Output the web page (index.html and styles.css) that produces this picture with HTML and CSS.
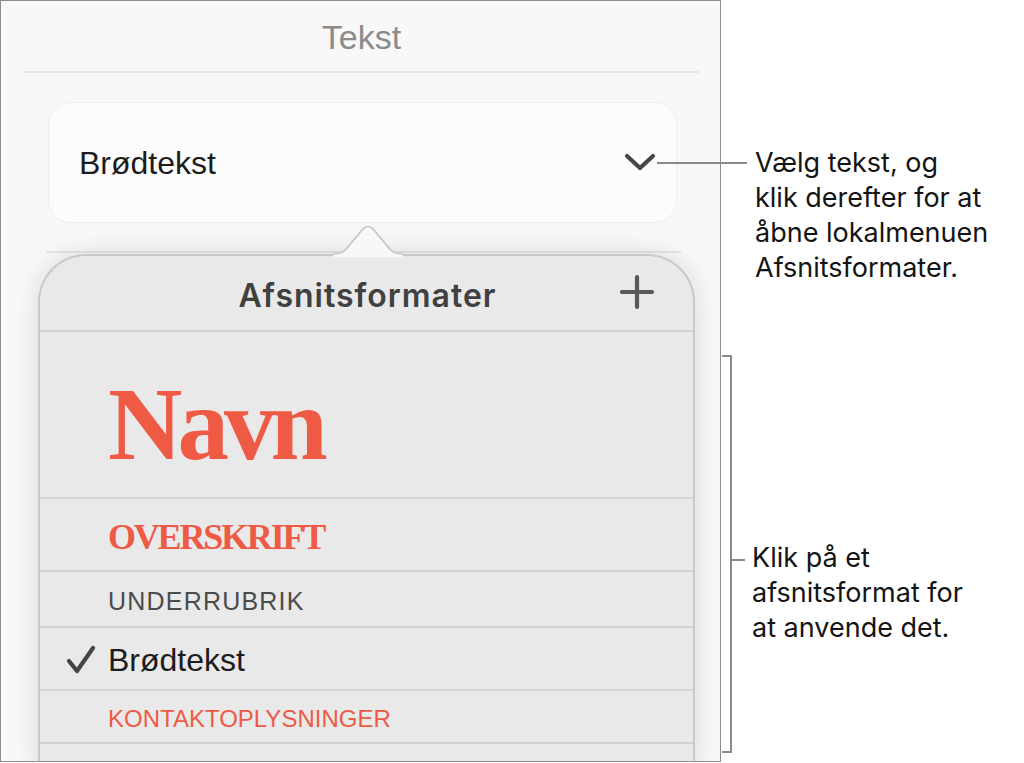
FILE: index.html
```html
<html>
  <head>
    <link rel="stylesheet" href="styles.css">
  </head>
  <body>
    <section class="panel">
      <h2 class="panel-title">Tekst</h2>

      <div class="style-select">
        <span class="style-select-value">Brødtekst</span>
        <svg class="chevron" width="32" height="20" viewBox="0 0 32 20">
          <path d="M3 3 L16 15 L29 3" />
        </svg>
      </div>

      <div class="panel-rule"></div>

      <div class="popover">
        <svg class="popover-arrow" width="72" height="32" viewBox="0 0 72 32">
          <path class="arrow-fill" d="M0 29 C8 29 11 27 15 22 L29 5 Q35 -2 41 5 L55 22 C59 27 62 29 70 29 L70 32 L0 32 Z" />
          <path class="arrow-edge" d="M0 29 C8 29 11 27 15 22 L29 5 Q35 -2 41 5 L55 22 C59 27 62 29 70 29" />
        </svg>
        <div class="popover-head">
          <span></span>
          <h3 class="popover-title">Afsnitsformater</h3>
          <svg class="plus" width="36" height="36" viewBox="0 0 36 36">
            <path d="M18 3 V33 M3 18 H33" />
          </svg>
        </div>
        <ul class="formats">
          <li class="format format-name"><span class="check"></span><span>Navn</span></li>
          <li class="format format-heading"><span class="check"></span><span>OVERSKRIFT</span></li>
          <li class="format format-sub"><span class="check"></span><span>UNDERRUBRIK</span></li>
          <li class="format format-body">
            <svg class="check" width="30" height="30" viewBox="0 0 30 30">
              <path d="M3 16 L11 26 L27 3" />
            </svg>
            <span>Brødtekst</span>
          </li>
          <li class="format format-contact"><span class="check"></span><span>KONTAKTOPLYSNINGER</span></li>
          <li class="format format-more"></li>
        </ul>
      </div>
    </section>

    <aside class="notes">
      <p class="note note-select">Vælg tekst, og<br />klik derefter for at<br />åbne lokalmenuen<br />Afsnitsformater.</p>
      <div class="note-list">
        <div class="bracket"></div>
        <p class="note note-apply">Klik på et<br />afsnitsformat for<br />at anvende det.</p>
      </div>
    </aside>
  </body>
</html>
```

FILE: styles.css
```css
html,
body,
ul,
p,
h2,
h3 {
  margin: 0;
  padding: 0;
}
html {
  font-family: "Liberation Sans", Arial, sans-serif;
  background: #fff;
}
ul {
  list-style-type: none;
}
body {
  display: flex;
  align-items: flex-start;
}

.panel {
  width: 721px;
  height: 762px;
  box-sizing: border-box;
  border: 1px solid #8e8e8e;
  background: #f8f8f8;
  overflow: hidden;
  flex-shrink: 0;
}
.panel-title {
  height: 72px;
  box-sizing: border-box;
  margin: 0 21px 0 23px;
  padding-top: 17px;
  border-bottom: 2px solid #e6e6e6;
  text-align: center;
  font-weight: normal;
  font-size: 34px;
  line-height: 39px;
  color: #8b8b8b;
}
.style-select {
  display: flex;
  align-items: center;
  justify-content: space-between;
  width: 629px;
  height: 121px;
  box-sizing: border-box;
  margin: 29px 0 0 47px;
  padding: 0 20px 0 30px;
  border: 1px solid #efefef;
  border-radius: 22px;
  background: #fcfcfc;
}
.style-select-value {
  font-size: 32px;
  color: #1c1c1c;
  padding-top: 2px;
}
.chevron path,
.plus path,
.check path {
  fill: none;
  stroke-width: 4.2;
  stroke-linecap: round;
  stroke-linejoin: round;
}
.chevron path {
  stroke: #474747;
}
.panel-rule {
  height: 2px;
  margin: 28px 39px 0 45px;
  background: #e6e6e6;
}

.popover {
  position: relative;
  width: 657px;
  height: 520px;
  box-sizing: border-box;
  margin: 1px 0 0 37px;
  border: 2px solid #c9c9c9;
  border-bottom: none;
  border-radius: 48px 48px 0 0;
  background: #e9e9e9;
  box-shadow: 0 0 26px rgba(0, 0, 0, 0.13);
}
.popover-arrow {
  position: absolute;
  top: -31px;
  left: 293px;
}
.arrow-fill {
  fill: #f8f8f8;
}
.arrow-edge {
  fill: none;
  stroke: #c4c4c4;
  stroke-width: 1.6;
}
.popover-head {
  display: grid;
  grid-template-columns: 1fr auto 1fr;
  align-items: center;
  height: 76px;
  box-sizing: border-box;
  padding: 0 38px;
  border-bottom: 2px solid #d2d2d2;
}
.popover-title {
  font-family: Inter, "Liberation Sans", sans-serif;
  font-weight: 600;
  font-size: 32px;
  letter-spacing: 1px;
  color: #404040;
  padding: 4px 0 0 2px;
}
.plus {
  justify-self: end;
  margin-top: -2px;
}
.plus path {
  stroke: #595959;
}

.format {
  display: grid;
  grid-template-columns: 68px 1fr;
  align-items: center;
  box-sizing: border-box;
  border-bottom: 2px solid #d2d2d2;
}
.format .check {
  justify-self: end;
  margin-right: 12px;
}
.check path {
  stroke: #454545;
}
.format-name {
  height: 167px;
  padding-top: 18px;
  font-family: "Liberation Serif", "Times New Roman", serif;
  font-weight: bold;
  font-size: 103px;
  letter-spacing: -5px;
  color: #ef5a45;
}
.format-heading {
  height: 73px;
  padding-top: 5px;
  font-family: "Liberation Serif", "Times New Roman", serif;
  font-weight: bold;
  font-size: 36px;
  letter-spacing: -2.2px;
  color: #ef5a45;
}
.format-sub {
  height: 56px;
  padding-top: 4px;
  font-size: 25px;
  letter-spacing: 1.2px;
  color: #4b4b4b;
}
.format-body {
  height: 63px;
  padding-top: 3px;
  font-size: 32px;
  color: #1c1c1c;
}
.format-contact {
  height: 53px;
  padding-top: 4px;
  font-size: 24px;
  color: #ef5a45;
}
.format-more {
  height: 60px;
}

.notes {
  display: flex;
  flex-direction: column;
  font-family: Inter, "Liberation Sans", sans-serif;
  font-size: 27px;
  color: #141414;
}
.note {
  line-height: 35px;
}
.note-select {
  position: relative;
  margin: 145px 0 0 34px;
}
.note-select::before {
  content: "";
  position: absolute;
  top: 17px;
  left: -98px;
  width: 90px;
  height: 2px;
  background: #8a8a8a;
}
.note-list {
  display: flex;
  align-items: flex-start;
  margin-top: 70px;
}
.bracket {
  position: relative;
  width: 10px;
  height: 398px;
  margin-left: 1px;
  border: 2px solid #8a8a8a;
  border-left: none;
  box-sizing: border-box;
}
.bracket::after {
  content: "";
  position: absolute;
  top: 202px;
  left: 10px;
  width: 13px;
  height: 2px;
  background: #8a8a8a;
}
.note-apply {
  margin: 185px 0 0 20px;
}
```
